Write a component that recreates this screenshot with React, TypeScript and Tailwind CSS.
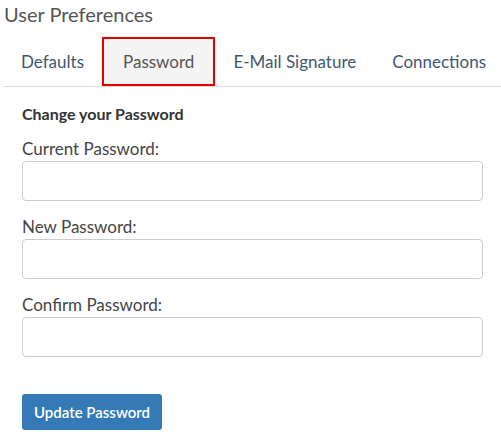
import React from "react";

export default function App() {
  const tabs = ["Defaults", "Password", "E-Mail Signature", "Connections"];
  const fields = ["Current Password:", "New Password:", "Confirm Password:"];
  return (
    <div className="w-[501px] h-[441px] bg-white overflow-hidden" style={{ fontFamily: "Lato, 'Open Sans', sans-serif" }}>
      <h1 className="pl-[4px] text-[20px] leading-[28px] text-[#555]">User Preferences</h1>
      <div className="ml-[3px] mt-[9px] flex border-b border-[#dddddd] overflow-hidden">
        {tabs.map((t) =>
          t === "Password" ? (
            <div key={t} className="shrink-0 whitespace-nowrap h-[49px] px-[19px] flex items-center border-2 border-[#e60000] bg-[#f4f4f4] text-[17px] text-[#555]">
              {t}
            </div>
          ) : (
            <div key={t} className="shrink-0 whitespace-nowrap h-[49px] px-[18px] flex items-center text-[17px] text-[#3f5872]">
              {t}
            </div>
          )
        )}
      </div>
      <div className="pl-[22px] pr-[18px] pt-[17px]">
        <div className="text-[16px] leading-[20px] font-bold text-[#333]">Change your Password</div>
        <div className="mt-[14px] flex flex-col gap-[15px]">
          {fields.map((f) => (
            <div key={f}>
              <div className="text-[17px] leading-[22px] text-[#444]">{f}</div>
              <div className="mt-[1px] h-[40px] w-[461px] rounded-[4px] border border-[#cccccc] bg-white" />
            </div>
          ))}
        </div>
        <button className="mt-[37px] h-[36px] w-[140px] rounded-[3px] bg-[#337ab7] text-white text-[15px] font-semibold">
          Update Password
        </button>
      </div>
    </div>
  );
}
